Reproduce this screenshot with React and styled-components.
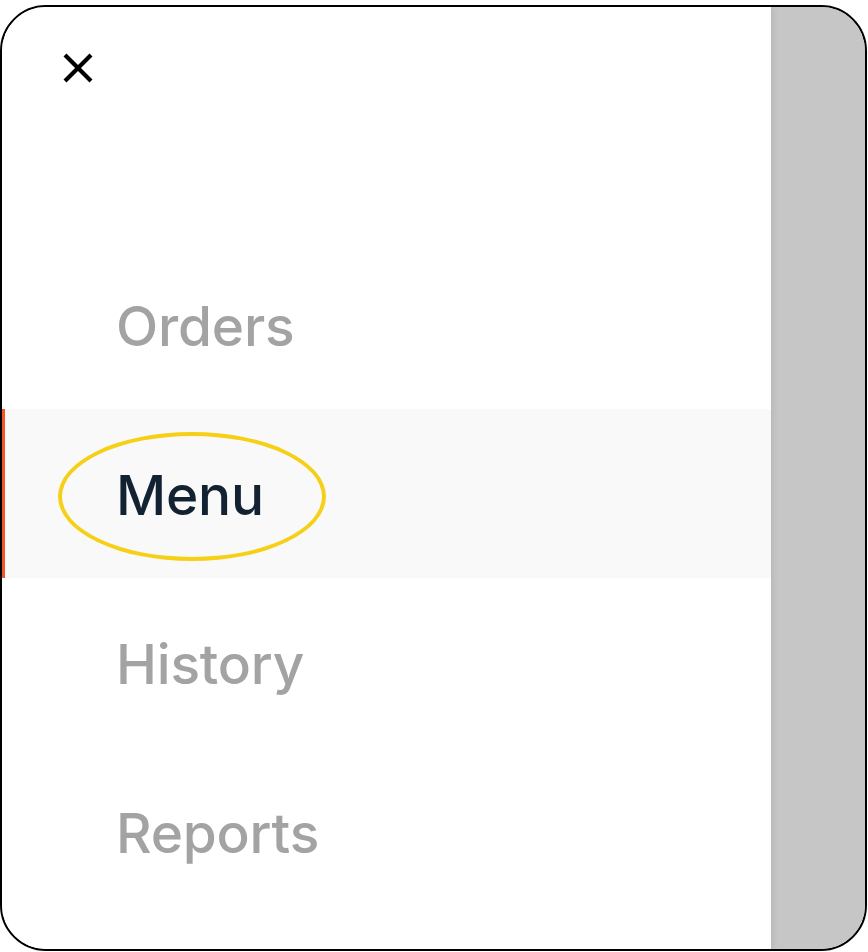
import React from "react";
import styled, { createGlobalStyle } from "styled-components";

const GlobalStyle = createGlobalStyle`
  * { box-sizing: border-box; }
  body {
    margin: 0;
    background: #ffffff;
    font-family: Inter, "Liberation Sans", sans-serif;
  }
`;

const Frame = styled.div`
  width: 867px;
  height: 946px;
  margin-top: 5px;
  border: 2px solid #000;
  border-radius: 46px;
  overflow: hidden;
  display: flex;
`;

const Drawer = styled.nav`
  width: 769px;
  height: 100%;
  background: #ffffff;
  box-shadow: 2px 0 6px rgba(0, 0, 0, 0.08);
  position: relative;
  z-index: 1;
`;

const Backdrop = styled.div`
  flex: 1;
  background: #c6c6c6;
`;

const Header = styled.div`
  padding: 45px 0 0 60px;
  height: 233px;
`;

const CloseButton = styled.button`
  width: 32px;
  height: 32px;
  padding: 0;
  border: none;
  background: none;
  cursor: pointer;
  display: block;
`;

const NavList = styled.ul`
  list-style: none;
  margin: 0;
  padding: 0;
`;

const NavItem = styled.li`
  position: relative;
  height: 169px;
  display: flex;
  align-items: center;
  padding-left: 114px;
  padding-top: 2px;
  font-size: 55px;
  font-weight: 500;
  letter-spacing: -0.2px;
  color: ${(props) => (props.active ? "#122232" : "#a3a3a3")};
  background: ${(props) => (props.active ? "#f9f9f9" : "transparent")};
  box-shadow: ${(props) => (props.active ? "inset 3px 0 0 #f0552b" : "none")};
`;

const Highlight = styled.span`
  position: absolute;
  left: 56px;
  top: 23px;
  width: 268px;
  height: 129px;
  border: 4px solid #f6cf17;
  border-radius: 50%;
  pointer-events: none;
`;

const items = ["Orders", "Menu", "History", "Reports"];

export default function App() {
  const current = "Menu";
  return (
    <>
      <GlobalStyle />
      <Frame>
        <Drawer>
          <Header>
            <CloseButton aria-label="Close">
              <svg width="32" height="32" viewBox="0 0 32 32">
                <path
                  d="M3 3 L29 29 M29 3 L3 29"
                  stroke="#000"
                  strokeWidth="4.2"
                  fill="none"
                />
              </svg>
            </CloseButton>
          </Header>
          <NavList>
            {items.map((item) => (
              <NavItem key={item} active={item === current}>
                {item}
                {item === current ? <Highlight /> : ""}
              </NavItem>
            ))}
          </NavList>
        </Drawer>
        <Backdrop />
      </Frame>
    </>
  );
}
